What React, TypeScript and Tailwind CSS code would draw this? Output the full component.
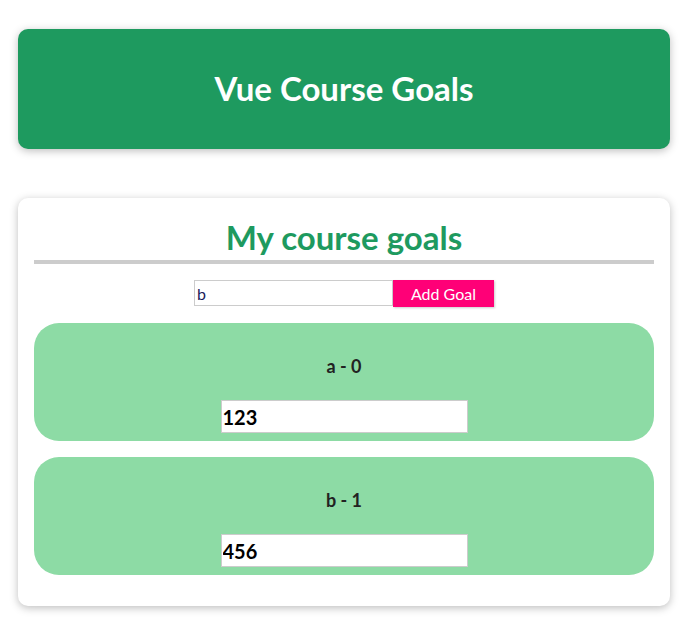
export default function App() {
  const goals = [
    { text: 'a', id: 0, value: '123' },
    { text: 'b', id: 1, value: '456' },
  ];

  return (
    <div className="min-h-[626px] bg-white pl-[18px] pt-[29px] font-['Lato',sans-serif]">
      <div className="w-[652px]">
        <header className="flex h-[120px] items-center justify-center rounded-[10px] bg-[#1e9a5f] shadow-[0_2px_8px_rgba(0,0,0,0.26)]">
          <h1 className="text-[33px] font-bold text-white">Vue Course Goals</h1>
        </header>

        <section className="mt-[49px] rounded-[10px] bg-white px-4 pb-[31px] pt-[18px] shadow-[0_2px_8px_rgba(0,0,0,0.26)]">
          <h2 className="border-b-4 border-[#ccc] pb-[2px] text-center text-[33px] leading-[42px] font-bold text-[#1e9a5f]">
            My course goals
          </h2>

          <div className="mt-4 flex justify-center">
            <input
              type="text"
              defaultValue="b"
              className="h-[26px] w-[199px] border border-[#ccc] px-[2px] text-[16px] text-[#1a1a5a] outline-none"
            />
            <button className="h-[27px] w-[101px] bg-[#ff0077] text-[16px] text-white shadow-[1px_1px_2px_rgba(0,0,0,0.2)]">
              Add Goal
            </button>
          </div>

          <ul className="mt-4 flex flex-col gap-4">
            {goals.map((g) => (
              <li
                key={g.id}
                className="flex h-[118px] flex-col items-center rounded-[25px] bg-[#8ddba5] pt-[31px]"
              >
                <span className="text-[18px] leading-6 font-bold text-[#222]">
                  {g.text} - {g.id}
                </span>
                <input
                  type="text"
                  defaultValue={g.value}
                  className="mt-[22px] h-[33px] w-[247px] border border-[#ccc] bg-white px-[1px] text-[20px] font-bold text-black outline-none"
                />
              </li>
            ))}
          </ul>
        </section>
      </div>
    </div>
  );
}
